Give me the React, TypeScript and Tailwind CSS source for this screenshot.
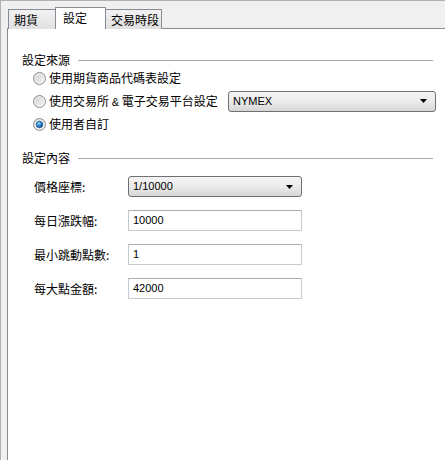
import React from "react";

const font = { fontFamily: '"Noto Sans CJK TC", "Liberation Sans", sans-serif' };

function Radio({ checked }: { checked?: boolean }) {
  return (
    <svg width="13" height="13" viewBox="0 0 13 13" className="shrink-0">
      <defs>
        <linearGradient id="rfill" x1="0" y1="0" x2="1" y2="1">
          <stop offset="0" stopColor="#cfcfcf" />
          <stop offset="1" stopColor="#f7f7f7" />
        </linearGradient>
        <radialGradient id="rdot" cx="0.4" cy="0.35" r="0.7">
          <stop offset="0" stopColor="#9fd8ff" />
          <stop offset="0.5" stopColor="#2a86d6" />
          <stop offset="1" stopColor="#0b3f7a" />
        </radialGradient>
      </defs>
      <circle cx="6.5" cy="6.5" r="6" fill="url(#rfill)" stroke="#8e8f8f" strokeWidth="1" />
      <circle cx="6.5" cy="6.5" r="4.5" fill="none" stroke="#f4f4f4" strokeWidth="0.8" />
      {checked && <circle cx="6.5" cy="6.5" r="3.3" fill="url(#rdot)" stroke="#1b4f86" strokeWidth="0.6" />}
    </svg>
  );
}

function Arrow() {
  return (
    <svg width="7" height="4" viewBox="0 0 7 4" className="shrink-0">
      <path d="M0 0 H7 L3.5 4 Z" fill="#000" />
    </svg>
  );
}

function Select({ value, className }: { value: string; className: string }) {
  return (
    <div
      className={
        "flex items-center justify-between rounded-[3px] border border-[#707070] bg-gradient-to-b from-[#f4f4f4] via-[#ebebeb] to-[#d6d6d6] pl-[4px] pr-[8px] " +
        className
      }
    >
      <span className="text-[11px] text-black" style={{ fontFamily: '"Liberation Sans", sans-serif' }}>
        {value}
      </span>
      <Arrow />
    </div>
  );
}

function Input({ value }: { value: string }) {
  return (
    <div className="flex h-[21px] w-[174px] items-center border border-[#c5c9d0] border-t-[#abadb3] bg-white pl-[4px]">
      <span className="text-[11px] text-black" style={{ fontFamily: '"Liberation Sans", sans-serif' }}>
        {value}
      </span>
    </div>
  );
}

function GroupHeader({ text, className }: { text: string; className?: string }) {
  return (
    <div className={"flex h-[16px] items-center pl-[14px] pr-[12px] " + (className ?? "")}>
      <span className="text-[12px] leading-[16px] text-black">{text}</span>
      <div className="ml-[8px] h-px flex-1 bg-[#a9a9a9]" />
    </div>
  );
}

function Row({ label, children }: { label: string; children: React.ReactNode }) {
  return (
    <div className="flex h-[21px] items-center pl-[26px]">
      <span className="w-[94px] text-[12px] leading-[16px] text-black">{label}</span>
      {children}
    </div>
  );
}

export default function App() {
  return (
    <div
      className="flex h-[460px] w-[445px] flex-col overflow-hidden border-l border-t border-[#b0b0b0] bg-[#f0f0f0] pl-[6px]"
      style={font}
    >
      <div className="relative z-10 -mb-px flex h-[28px] items-end pl-[1px]">
        <div className="flex h-[20px] w-[48px] items-start border border-b-0 border-[#898c95] bg-gradient-to-b from-[#f2f2f2] to-[#e0e0e0] pl-[5px] pt-[2px] text-[12px] leading-[16px] text-black">
          期貨
        </div>
        <div className="relative z-10 -ml-px flex h-[22px] w-[51px] items-start border border-b-0 border-[#898c95] bg-white pl-[7px] pt-[2px] text-[12px] leading-[16px] text-black">
          設定
        </div>
        <div className="-ml-px flex h-[20px] w-[57px] items-start border border-b-0 border-[#898c95] bg-gradient-to-b from-[#f2f2f2] to-[#e0e0e0] pl-[5px] pt-[2px] text-[12px] leading-[16px] text-black">
          交易時段
        </div>
      </div>
      <div className="flex flex-1 flex-col border-l border-t border-[#898c95] bg-white pt-[23px]">
        <GroupHeader text="設定來源" />
        <div className="flex flex-col gap-[3px]">
          <div className="flex h-[20px] items-center pl-[25px]">
            <Radio />
            <span className="ml-[3px] text-[12px] leading-[16px] text-black">使用期貨商品代碼表設定</span>
          </div>
          <div className="flex h-[20px] items-center pl-[25px] pr-[9px]">
            <Radio />
            <span className="ml-[3px] text-[12px] leading-[16px] text-black">
              使用交易所 <span style={{ fontFamily: '"Liberation Sans", sans-serif' }} className="text-[11px]">&amp;</span> 電子交易平台設定
            </span>
            <Select value="NYMEX" className="ml-auto h-[21px] w-[208px]" />
          </div>
          <div className="flex h-[20px] items-center pl-[25px]">
            <Radio checked />
            <span className="ml-[3px] text-[12px] leading-[16px] text-black">使用者自訂</span>
          </div>
        </div>
        <GroupHeader text="設定內容" className="mt-[16px]" />
        <div className="mt-[10px] flex flex-col gap-[13px]">
          <Row label="價格座標:">
            <Select value="1/10000" className="h-[21px] w-[174px]" />
          </Row>
          <Row label="每日漲跌幅:">
            <Input value="10000" />
          </Row>
          <Row label="最小跳動點數:">
            <Input value="1" />
          </Row>
          <Row label="每大點金額:">
            <Input value="42000" />
          </Row>
        </div>
      </div>
    </div>
  );
}
